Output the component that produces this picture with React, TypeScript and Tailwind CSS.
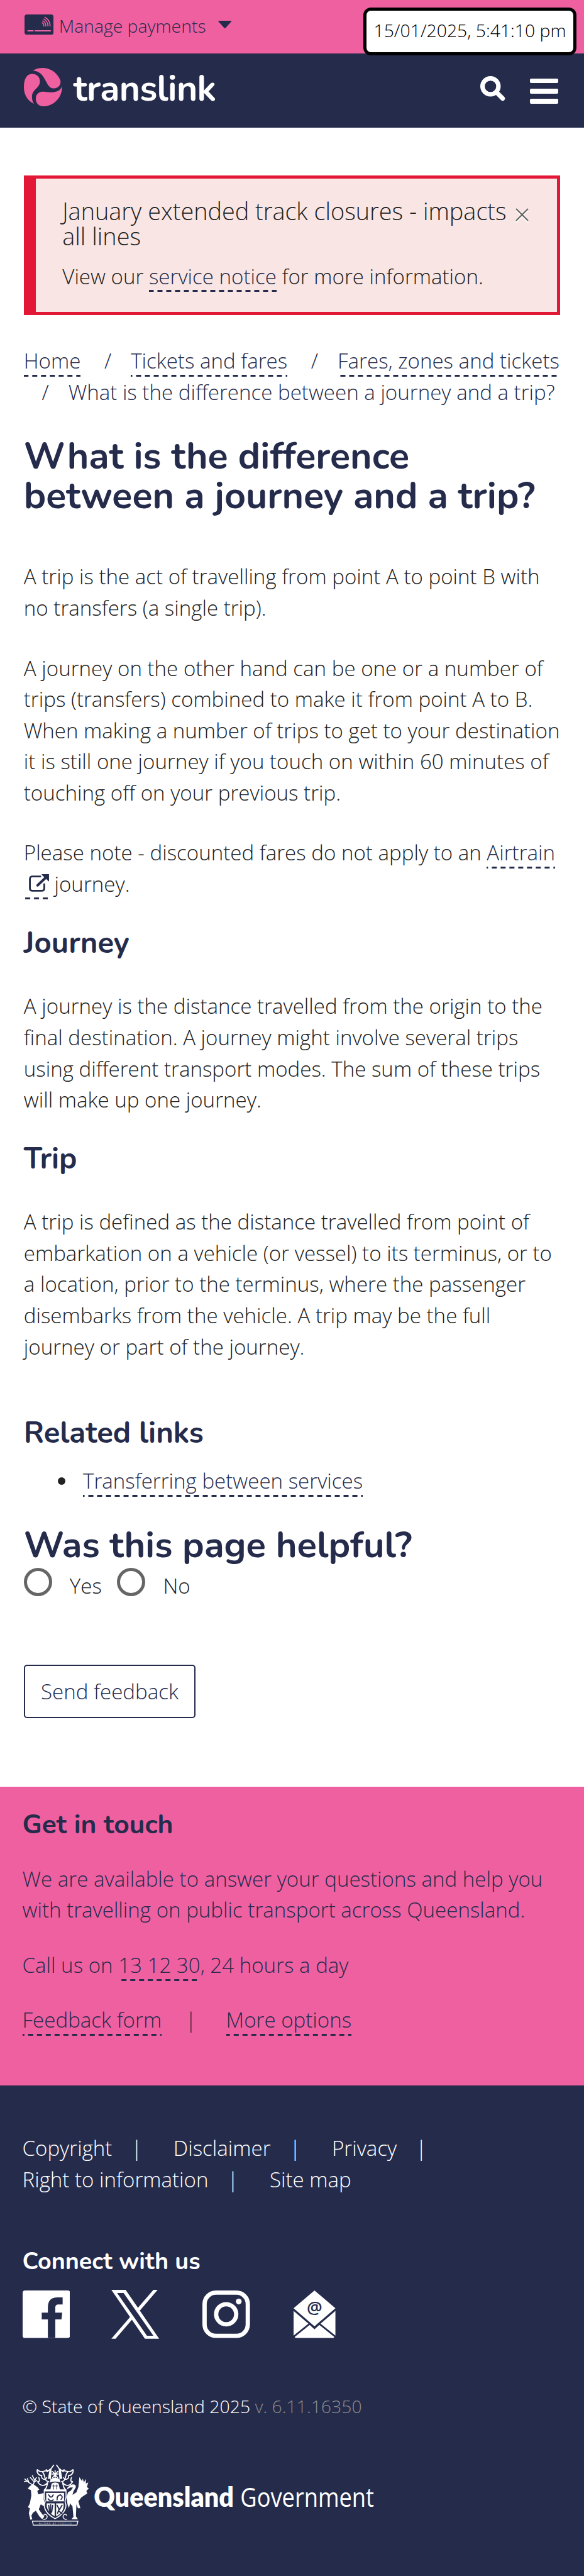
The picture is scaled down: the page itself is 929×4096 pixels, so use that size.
import React from "react";

const dashed =
  "bg-[linear-gradient(90deg,transparent_22%,#252b4b_22%,#252b4b_78%,transparent_78%)] bg-[length:14px_3px] bg-bottom bg-repeat-x pb-[2.4px]";

function Link({ children }: { children: React.ReactNode }) {
  return (
    <a href="#" className={`text-[#252b4b] ${dashed}`}>
      {children}
    </a>
  );
}

const h2 = "font-['Nunito','Lato',sans-serif] text-[47.3px] leading-[50px] font-bold text-[#252b4b]";
const para = "leading-[49.64px] whitespace-nowrap";

function CardIcon() {
  return (
    <svg viewBox="0 0 176 123" className="mt-[23px] h-[32.3px] w-[46.2px]" fill="none" strokeLinecap="round">
      <rect width="176" height="123" rx="15" fill="#252b4b" />
      <g stroke="#ef60a1">
        <path d="M21 99H52M65 99H157" strokeWidth="8" />
        <path d="M107 51Q117 53 117 70M110 39Q129 45 129 70M117 28Q142 40 142 70M123 17Q155 32 155 70" strokeWidth="6" />
      </g>
    </svg>
  );
}

function Roundel() {
  return (
    <svg viewBox="0 0 232 232" className="size-[61px]" fill="#ef60a1">
      <path d="M62 218C25 200 0 165 0 118C0 70 15 36 50 36C80 36 97 55 97 82C97 122 49 130 49 175C49 195 54 208 62 218Z" />
      <path d="M54 17C75 3 95 0 116 0C165 0 206 36 221 76C227 106 204 124 178 124C128 122 136 18 54 17Z" />
      <path d="M231 110C233 180 180 232 116 232C88 232 71 210 72 185C73 160 90 144 113 144C145 144 212 162 231 110Z" />
    </svg>
  );
}

function SearchIcon() {
  return (
    <svg viewBox="0 0 50 50" className="size-[39.6px]" fill="none" stroke="white" strokeWidth="9" strokeLinecap="round">
      <circle cx="20.5" cy="20.5" r="16" />
      <path d="M32 32L45 45" />
    </svg>
  );
}

function MenuIcon() {
  return (
    <div className="flex w-[45px] flex-col gap-[8.6px]">
      <span className="h-[7.7px] rounded-[2px] bg-white" />
      <span className="h-[7.7px] rounded-[2px] bg-white" />
      <span className="h-[7.7px] rounded-[2px] bg-white" />
    </div>
  );
}

function ExternalIcon() {
  return (
    <svg viewBox="0 0 41 35.4" className="inline-block h-[28px] w-[32.3px] align-baseline" fill="none" stroke="#252b4b">
      <path d="M23 4.6H7Q2 4.6 2 9.5V28.5Q2 33.5 7 33.5H26Q31 33.5 31 28.5V20" strokeWidth="3.6" strokeLinecap="round" />
      <path d="M17.5 22.5L35 6" strokeWidth="5" strokeLinecap="round" />
      <path d="M26.5 .8H40.2V13.6Z" fill="#252b4b" strokeWidth="1.5" strokeLinejoin="round" />
    </svg>
  );
}

function FacebookIcon() {
  return (
    <svg viewBox="0 0 96 96" className="size-[75.6px]">
      <rect width="96" height="96" rx="5" fill="white" />
      <path
        d="M51 96V58.3H38.6V44.7H51V34C51 20 58 14 70 14H80.8V28.3H73C68 28.3 66 30 66 35V44.7H80L78.5 58.3H66V96Z"
        fill="#252b4b"
      />
    </svg>
  );
}

function XIcon() {
  return (
    <svg viewBox="0 0 1200 1227" className="ml-[66px] h-[77.8px] w-[76.4px]" fill="white">
      <path d="M714.163 519.284L1160.89 0H1055.03L667.137 450.887L357.328 0H0L468.492 681.821L0 1226.37H105.866L515.491 750.218L842.672 1226.37H1200L714.137 519.284H714.163ZM569.165 687.828L521.697 619.934L144.011 79.6944H306.615L611.412 515.685L658.88 583.579L1055.08 1150.3H892.476L569.165 687.854V687.828Z" />
    </svg>
  );
}

function InstagramIcon() {
  return (
    <svg viewBox="0 0 96 96" className="ml-[69px] size-[75.6px]" fill="none" stroke="white" strokeWidth="8.7">
      <rect x="4.35" y="4.35" width="87.3" height="87.3" rx="23" />
      <circle cx="48" cy="48" r="20.3" />
      <circle cx="73.4" cy="22.3" r="5.8" fill="white" stroke="none" />
    </svg>
  );
}

function MailIcon() {
  return (
    <svg viewBox="0 0 84.5 96" className="ml-[69px] h-[75.6px] w-[66.6px]" fill="white">
      <path d="M42.25 0L84.5 36L42.25 72.3L0 36ZM0 41.3L30 67L0 91ZM84.5 41.3L54.5 67L84.5 91Z" />
      <path d="M32.5 69.5L42.25 78.5L52 69.5L82 93.5Q82 96 79.5 96H5Q2.5 96 2.5 93.5Z" />
      <text x="42.25" y="47" textAnchor="middle" fontSize="35" fill="#252b4b" className="font-['Open_Sans',sans-serif] font-semibold">
        @
      </text>
    </svg>
  );
}

function GovernmentLogo() {
  return (
    <svg viewBox="0 0 712 123" className="ml-[2.8px] h-[96.9px] w-[561px]" fill="white">
      {/* crest and mantling */}
      <g fill="none" stroke="white" strokeWidth="2.2" strokeLinecap="round" strokeLinejoin="round">
        <path d="M60 1L55 8L50 28M66 1L71 8L76 28M55 8L47 14L45 10M71 8L79 14L81 10" />
        <path d="M63 12V28M57 19H69M58 14L68 26M68 14L58 26" />
        <path d="M48 12C40 12 34 18 27 10C25 16 30 22 36 22C34 30 44 32 46 26M30 26C34 36 26 36 28 34C32 44 42 44 48 36C46 44 46 48 41 51L56 51" />
        <path d="M78 12C86 12 92 18 99 10C101 16 96 22 90 22C92 30 82 32 80 26M96 26C92 36 100 36 98 34C94 44 84 44 78 36C80 44 80 48 85 51L70 51" />
        <path d="M37 14C44 20 40 34 50 34M89 14C82 20 86 34 76 34" />
      </g>
      <path d="M52 8L56 13L54 30L49 26ZM74 8L70 13L72 30L77 26ZM54 29Q63 24 72 29L74 36Q63 32 52 36Z" />
      <path d="M56 38Q63 34 70 38L73 52H53Z" />
      <path d="M60 40V50M66 40V50M57.5 43H62.5M63.5 43H68.5" stroke="#252b4b" strokeWidth="1.2" />
      {/* red deer */}
      <path d="M18 41L10 36L2 29M10 36L7 28M6 33L1 34M19 40L22 32L17 22M21 35L13 26M22 32L25 26M22 34L26 32" fill="none" stroke="white" strokeWidth="2" strokeLinecap="round" />
      <path d="M15 41L20 40L28 46L31 50L27 53L29 60L40 57V70L44 86L34 80L30 90L37 100L41 105L37 110L31 104L24 93L18 97L15 103L17 110L13 111L10 98L12 88L8 86L12 78L15 62L14 51L8 49L10 45Z" />
      {/* brolga */}
      <path d="M112 25L117 33L119 28L121 36L125 29L125 38L130 36L127 45L131 48L126 53L128 58L122 62L116 66L110 74L114 88L109 88L106 80L105 104L109 110H96L100 105L98 84L93 78L91 88L88 80L86 66L89 56L95 52L99 46L93 46L87 50L88 46L94 41Q104 37 105 45L100 54L98 61L106 56L110 45Z" />
      {/* shield */}
      <path d="M41 53H85V66L83 74L85 82Q84 98 63 109Q42 98 41 82L43 74L41 66Z" fill="#252b4b" stroke="white" strokeWidth="2" />
      <path d="M45 57H81V74H45Z" />
      <path d="M46 78H62V104Q48 96 46 84ZM65 78H80Q82 96 65 104Z" />
      <path
        d="M50 61Q55 70 59 61M49 69Q54 76 59 71M67 71Q66 62 74 61Q80 65 75 70M50 82L52 96M54 81V98M58 82L56 96M67 82L71 90L68 98M77 82L72 90M70 93L77 99"
        fill="none"
        stroke="#252b4b"
        strokeWidth="2.4"
        strokeLinecap="round"
      />
      {/* scroll */}
      <path
        d="M17 114H109L107 122H19ZM39 110C44 112 50 106 45 101Q41 98 40 103M87 110C82 112 76 106 81 101Q85 98 86 103"
        fill="none"
        stroke="white"
        strokeWidth="1.8"
      />
      <text x="63" y="120.4" textAnchor="middle" fontSize="5.6" textLength="66" className="font-['Lato',sans-serif]">
        AUDAX AT FIDELIS
      </text>
      <text x="141" y="84.7" fontSize="54" textLength="283" lengthAdjust="spacingAndGlyphs" className="font-['Lato',sans-serif] font-extrabold">
        Queensland
      </text>
      <text x="437" y="84.7" fontSize="54" textLength="270" lengthAdjust="spacingAndGlyphs" className="font-['Open_Sans',sans-serif] font-normal">
        Government
      </text>
    </svg>
  );
}

function FooterLink({ children, last = false }: { children: string; last?: boolean }) {
  return (
    <span className="flex">
      <a href="#">{children}</a>
      {!last && <span className="mr-[49.5px] ml-[30px]">|</span>}
    </span>
  );
}

function Radio({ label }: { label: string }) {
  return (
    <label className="flex gap-[28px]">
      <span className="size-[45px] rounded-full border-[5px] border-[#666]" />
      <span className="mt-[3.5px] leading-[49.64px]">{label}</span>
    </label>
  );
}

export default function App() {
  return (
    <div className="relative flex h-[4096px] w-[929px] flex-col overflow-hidden bg-white font-['Open_Sans','Noto_Sans',sans-serif] text-[33.1px] font-light text-[#222]">
      <div className="flex h-[85px] shrink-0 items-start bg-[#ef60a1] pl-[38.9px] text-[28.37px] text-[#252b4b]">
        <CardIcon />
        <span className="mt-[20px] ml-[8.6px] leading-[42px]">Manage payments</span>
        <svg viewBox="0 0 82 46" className="mt-[33px] ml-[19.4px] h-[12.1px] w-[21.5px]" fill="#252b4b">
          <path d="M5 0H77Q84 0 80 5L46 43Q41 48 36 43L2 5Q-2 0 5 0Z" />
        </svg>
      </div>
      <div className="absolute top-[12px] right-[12px] flex h-[75.5px] w-[339px] items-center justify-center rounded-[12px] border-[5px] border-black bg-white pb-[2px] text-[28.37px] text-black">
        15/01/2025, 5:41:10 pm
      </div>

      <header className="flex h-[118px] shrink-0 items-start bg-[#252b4b] pr-[41px] pl-[37.8px]">
        <div className="mt-[23px]">
          <Roundel />
        </div>
        <span className="mt-[26px] ml-[18px] font-['Nunito','Lato',sans-serif] text-[57px] leading-[60px] font-bold tracking-[-0.7px] text-white">
          translink
        </span>
        <div className="mt-[36.4px] ml-auto">
          <SearchIcon />
        </div>
        <div className="mt-[39.6px] ml-[39px]">
          <MenuIcon />
        </div>
      </header>

      <main className="flex flex-col px-[37.8px]">
        <section className="mt-[76px] h-[222px] border-[5px] border-l-[19px] border-[#e31836] bg-[#f9e6e4] pt-[32px] pl-[42.5px]">
          <div className="flex text-[37.8px] leading-[40px]">
            <p className="whitespace-nowrap">
              January extended track closures - impacts
              <br />
              all lines
            </p>
            <svg viewBox="0 0 21 24" className="mt-[15px] ml-[14px] h-[24px] w-[21px]" fill="none" strokeWidth="2.2">
              <path d="M1 3.4L20 22.4M20 3.4L1 22.4" stroke="white" />
              <path d="M1 1L20 20M20 1L1 20" stroke="#666" />
            </svg>
          </div>
          <p className={`mt-[18.5px] ${para}`}>
            View our <Link>service notice</Link> for more information.
          </p>
        </section>

        <nav className="mt-[48.3px] flex flex-col leading-[49.64px] whitespace-nowrap text-[#252b4b]">
          <div className="flex">
            <span><Link>Home</Link></span>
            <span className="ml-[37.5px]">/</span>
            <span className="ml-[31px]"><Link>Tickets and fares</Link></span>
            <span className="ml-[37.5px]">/</span>
            <span className="ml-[31px]"><Link>Fares, zones and tickets</Link></span>
          </div>
          <div className="flex pl-[28.6px]">
            <span>/</span>
            <span className="ml-[31px]">What is the difference between a journey and a trip?</span>
          </div>
        </nav>

        <h1 className="mt-[45.5px] font-['Nunito','Lato',sans-serif] text-[59.2px] leading-[63.4px] font-bold whitespace-nowrap text-[#252b4b]">
          What is the difference
          <br />
          between a journey and a trip?
        </h1>

        <p className={`mt-[71.4px] ${para}`}>
          A trip is the act of travelling from point A to point B with
          <br />
          no transfers (a single trip).
        </p>
        <p className={`mt-[46px] ${para}`}>
          A journey on the other hand can be one or a number of
          <br />
          trips (transfers) combined to make it from point A to B.
          <br />
          When making a number of trips to get to your destination
          <br />
          it is still one journey if you touch on within 60 minutes of
          <br />
          touching off on your previous trip.
        </p>
        <p className={`mt-[45.4px] ${para}`}>
          Please note - discounted fares do not apply to an <Link>Airtrain</Link>
          <br />
          <a href="#" className={`pl-[7.8px] ${dashed}`}>
            <ExternalIcon />
          </a>{" "}
          journey.
        </p>

        <h2 className={`mt-[44.3px] ${h2}`}>Journey</h2>
        <p className={`mt-[50.5px] ${para}`}>
          A journey is the distance travelled from the origin to the
          <br />
          final destination. A journey might involve several trips
          <br />
          using different transport modes. The sum of these trips
          <br />
          will make up one journey.
        </p>

        <h2 className={`mt-[44.1px] ${h2}`}>Trip</h2>
        <p className={`mt-[50.1px] ${para}`}>
          A trip is defined as the distance travelled from point of
          <br />
          embarkation on a vehicle (or vessel) to its terminus, or to
          <br />
          a location, prior to the terminus, where the passenger
          <br />
          disembarks from the vehicle. A trip may be the full
          <br />
          journey or part of the journey.
        </p>

        <h2 className={`mt-[88.3px] ${h2}`}>Related links</h2>
        <ul className="mt-[25.9px]">
          <li className={`flex items-center pl-[54.7px] ${para}`}>
            <span className="mr-[28px] size-[11.6px] rounded-full bg-[#222]" />
            <span><Link>Transferring between services</Link></span>
          </li>
        </ul>

        <h1 className="mt-[45.4px] font-['Nunito','Lato',sans-serif] text-[57.95px] leading-[64px] font-bold text-[#252b4b]">
          Was this page helpful?
        </h1>
        <div className="mt-[3.9px] flex h-[52px] items-start gap-[24.6px] text-[#222]">
          <Radio label="Yes" />
          <Radio label="No" />
        </div>
        <button className="mt-[101.7px] h-[85.4px] w-[273.4px] rounded-[5px] border-2 border-[#252b4b] text-[#252b4b]">
          Send feedback
        </button>
      </main>

      <section className="mt-[108.7px] h-[475.2px] shrink-0 bg-[#ef60a1] pt-[34.6px] pl-[35.5px] text-[#252b4b]">
        <h3 className="font-['Nunito','Lato',sans-serif] text-[42.6px] leading-[50px] font-bold">Get in touch</h3>
        <p className={`mt-[37.2px] ${para}`}>
          We are available to answer your questions and help you
          <br />
          with travelling on public transport across Queensland.
        </p>
        <p className={`mt-[38.1px] ${para}`}>
          Call us on <Link>13 12 30</Link>, 24 hours a day
        </p>
        <div className={`mt-[37.5px] flex ${para}`}>
          <span><Link>Feedback form</Link></span>
          <span className="mr-[47px] ml-[37.6px]">|</span>
          <span><Link>More options</Link></span>
        </div>
      </section>

      <footer className="flex-1 bg-[#252b4b] pt-[75px] pl-[35.5px] text-white">
        <div className={`flex ${para}`}>
          <FooterLink>Copyright</FooterLink>
          <FooterLink>Disclaimer</FooterLink>
          <FooterLink>Privacy</FooterLink>
        </div>
        <div className={`flex ${para}`}>
          <FooterLink>Right to information</FooterLink>
          <FooterLink last>Site map</FooterLink>
        </div>
        <h3 className="mt-[80.2px] font-['Nunito','Lato',sans-serif] text-[37.8px] leading-[50px] font-bold">Connect with us</h3>
        <div className="mt-[21.3px] flex h-[75.6px] items-center">
          <FacebookIcon />
          <XIcon />
          <InstagramIcon />
          <MailIcon />
        </div>
        <p className="mt-[87.8px] text-[28.37px] leading-[42.5px]">
          © State of Queensland 2025 <span className="text-[#8a8a8a]">v. 6.11.16350</span>
        </p>
        <div className="mt-[71px] flex">
          <GovernmentLogo />
        </div>
      </footer>
    </div>
  );
}
